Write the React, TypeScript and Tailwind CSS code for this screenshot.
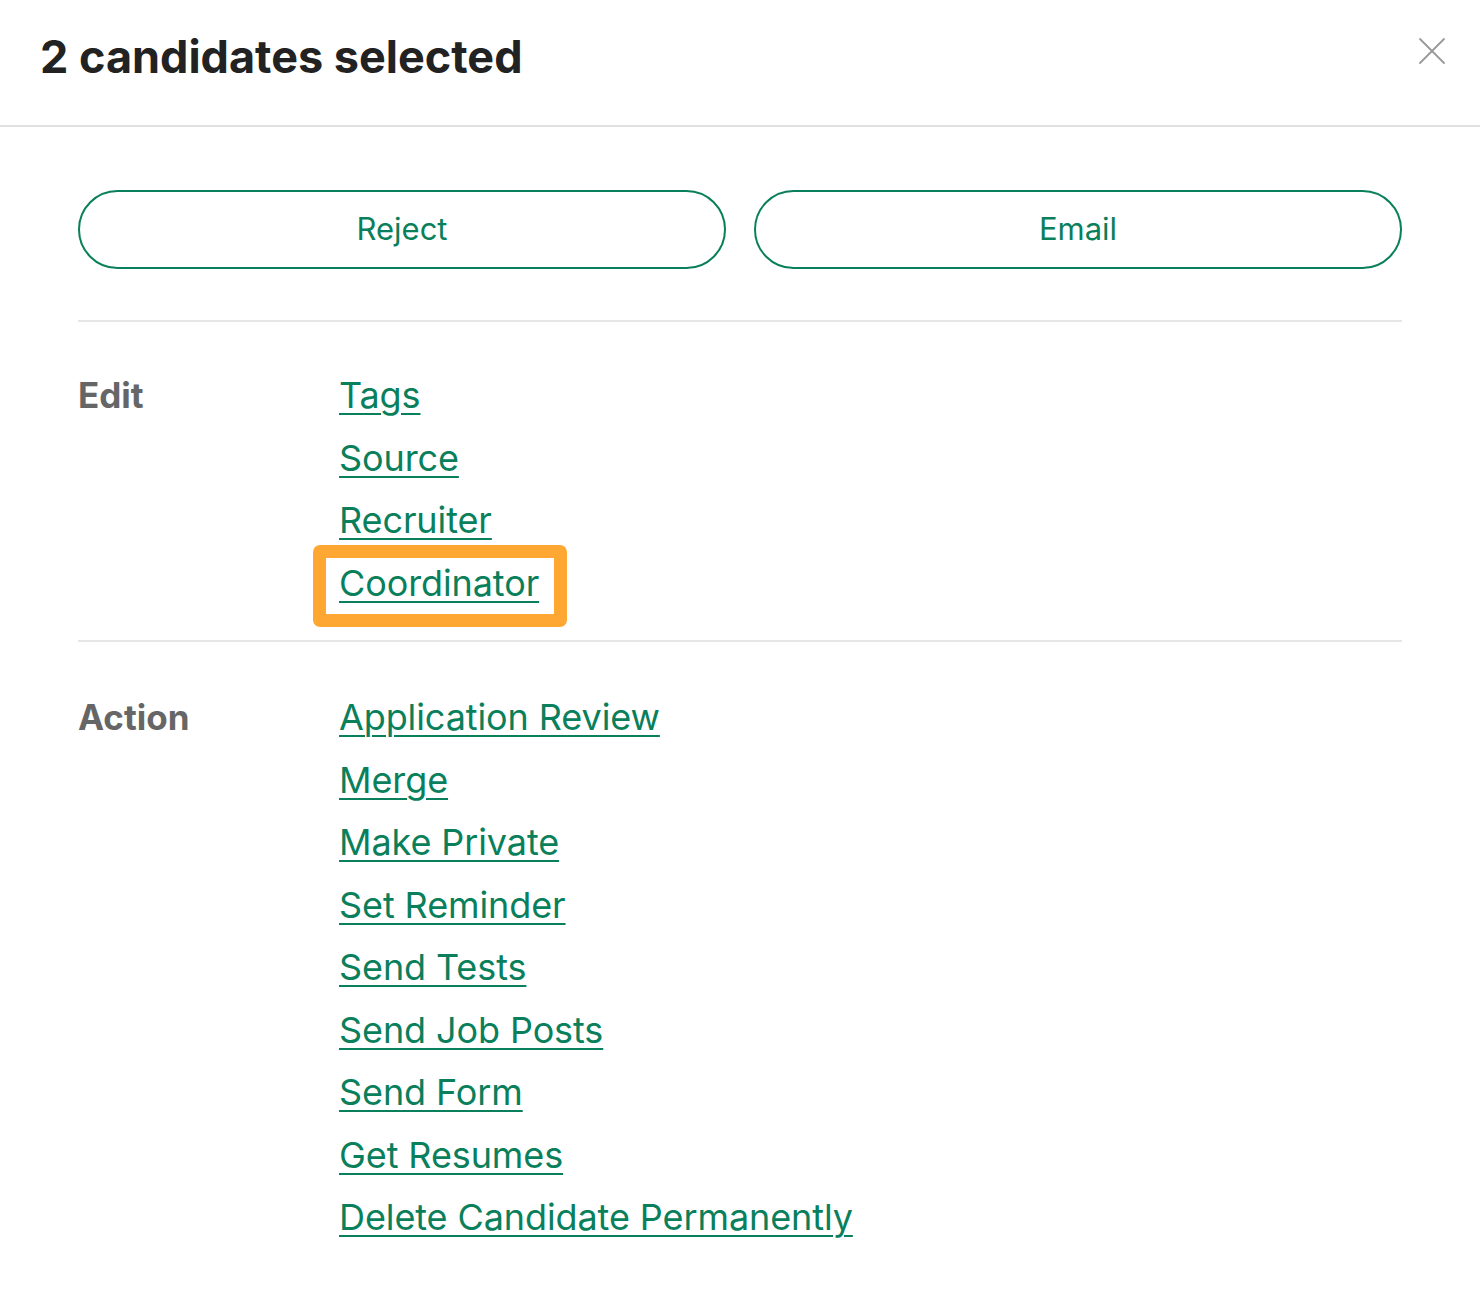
import { X } from "lucide-react";

const editLinks = ["Tags", "Source", "Recruiter", "Coordinator"];
const actionLinks = [
  "Application Review",
  "Merge",
  "Make Private",
  "Set Reminder",
  "Send Tests",
  "Send Job Posts",
  "Send Form",
  "Get Resumes",
  "Delete Candidate Permanently",
];

function LinkList({ items, highlight }: { items: string[]; highlight?: string }) {
  return (
    <ul className="flex flex-col">
      {items.map((item) => (
        <li key={item} className="relative w-fit text-[36px] leading-[62.5px] tracking-[-0.1px]">
          <a href="#" className="text-[#0a7f5b] underline decoration-2 underline-offset-[5px]">
            {item}
          </a>
          {item === highlight && (
            <span className="pointer-events-none absolute -left-[26px] -right-[28px] -top-[7px] -bottom-[13px] rounded-[7px] border-[13px] border-[#ffa733]" />
          )}
        </li>
      ))}
    </ul>
  );
}

export default function App() {
  return (
    <div className="min-h-[1316px] w-[1480px] bg-white font-['Inter',sans-serif]">
      <header className="flex h-[127px] items-start justify-between border-b-2 border-[#e1e1e1] pl-[40px] pr-[24px]">
        <h1 className="pt-[23px] text-[45px] font-bold text-[#222]">2 candidates selected</h1>
        <button className="mt-[27px] text-[#999]">
          <X size={48} strokeWidth={0.9} />
        </button>
      </header>

      <main className="px-[78px]">
        <div className="grid grid-cols-2 gap-[28px] pt-[63px] pb-[51px]">
          <button className="h-[79px] rounded-full border-2 border-[#0a7f5b] text-[31px] text-[#0a7f5b]">Reject</button>
          <button className="h-[79px] rounded-full border-2 border-[#0a7f5b] text-[31px] text-[#0a7f5b]">Email</button>
        </div>

        <section className="flex border-t-2 border-[#e6e6e6] pt-[42px] pb-[26px]">
          <h2 className="w-[261px] text-[35px] font-bold leading-[62.5px] text-[#666]">Edit</h2>
          <LinkList items={editLinks} highlight="Coordinator" />
        </section>

        <section className="flex border-t-2 border-[#e6e6e6] pt-[44px] pb-[40px]">
          <h2 className="w-[261px] text-[35px] font-bold leading-[62.5px] text-[#666]">Action</h2>
          <LinkList items={actionLinks} />
        </section>
      </main>
    </div>
  );
}
